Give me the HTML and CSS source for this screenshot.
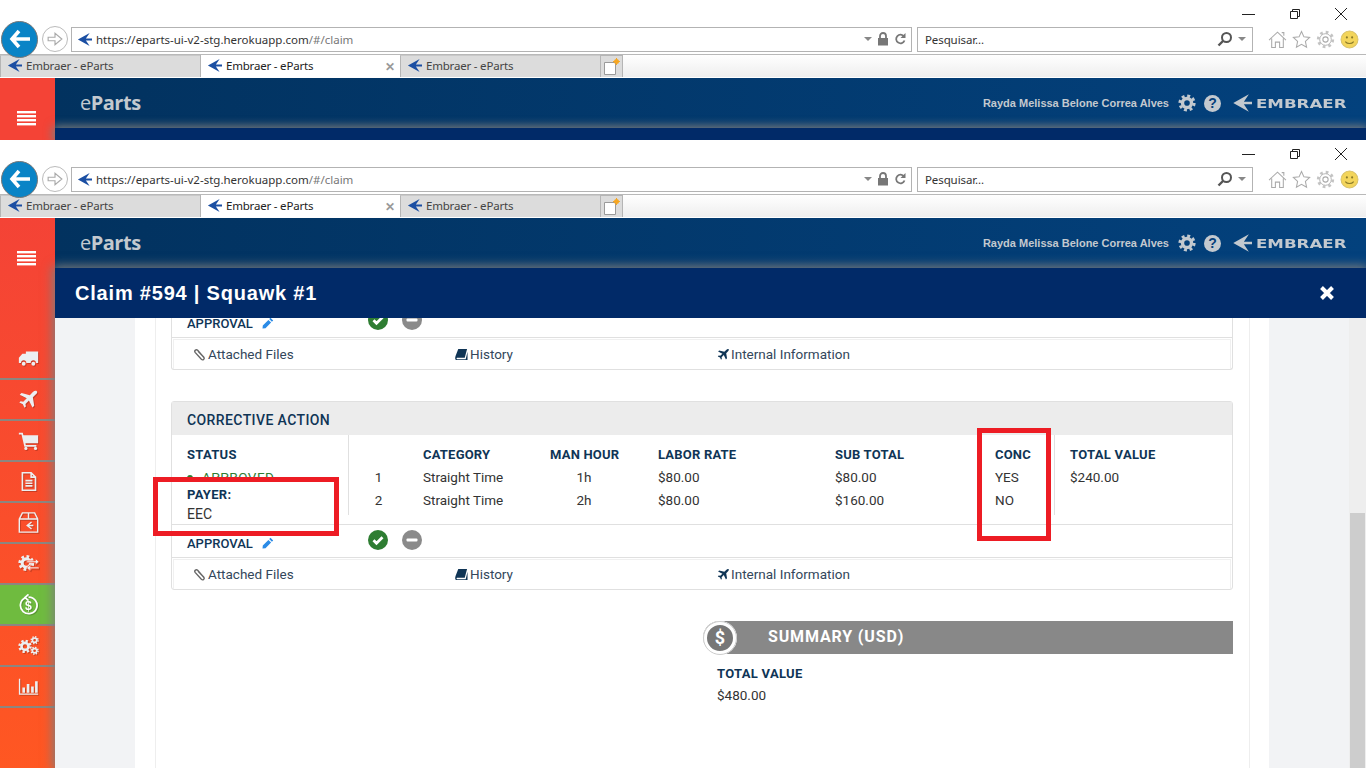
FILE: index.html
```html
<!DOCTYPE html>
<html lang="en">
<head>
    <meta charset="UTF-8">
    <title>Embraer - eParts</title>
    <link rel="stylesheet" href="styles.css">
</head>
<body>
    <svg class="sprite" xmlns="http://www.w3.org/2000/svg">
        <symbol id="i-logo" viewBox="0 0 16 16"><path d="M13.500 1L1 8l12.500 7-4-6H16V7H9.500z"/></symbol>
        <symbol id="i-gear" viewBox="0 0 24 24"><circle cx="12" cy="12" r="9.500" fill="none" stroke="currentColor" stroke-width="4" stroke-dasharray="3.900 3.560"/><circle cx="12" cy="12" r="6" fill="none" stroke="currentColor" stroke-width="4.500"/></symbol>
        <symbol id="i-truck" viewBox="0 0 24 24"><path d="M9 4h14v13h-2.500a3 3 0 0 0-6 0H9.500a3 3 0 0 0-6 0H1v-6l4-4.500h4z"/><circle cx="6.500" cy="18" r="2.200"/><circle cx="17.500" cy="18" r="2.200"/></symbol>
        <symbol id="i-plane" viewBox="0 0 24 24"><path d="M21.500 2.500c-1-1-3-.5-4.500 1L13.500 7 4 4.500 2 6.500l8 4-4 4-3-.5-1.500 1.500 4 2 2 4 1.500-1.500-.5-3 4-4 4 8 2-2L17 9.500 20.500 6c1.500-1.500 2-2.500 1-3.500z"/></symbol>
        <symbol id="i-cart" viewBox="0 0 24 24"><path d="M1 3h4.500l.8 3H23v9H8.500l.4 2H21v2H7.300L4 5H1z"/><circle cx="9" cy="21" r="1.800"/><circle cx="20" cy="21" r="1.800"/></symbol>
        <symbol id="i-file" viewBox="0 0 24 24"><path d="M5 2h10l5 5v15H5zM15 2v5h5M8.500 11h8M8.500 14h8M8.500 17h8" fill="none" stroke="currentColor" stroke-width="1.800"/></symbol>
        <symbol id="i-return" viewBox="0 0 24 24"><path d="M1.500 8L5 1h14l3.500 7v15h-21zM1.500 8h21M12 1v7M15.500 11.500l-5 4 5 4M10.500 15.500h7" fill="none" stroke="currentColor" stroke-width="1.600"/></symbol>
        <symbol id="i-swap" viewBox="0 0 24 24"><use href="#i-gear" x="0" y="2" width="19" height="19"/><path d="M10 9h10V6.500l4 3.500-4 3.500V11H10zM24 16H14v-2.500L10 17l4 3.500V18h10z" stroke="#ff5030" stroke-width=".8"/></symbol>
        <symbol id="i-money" viewBox="0 0 24 24"><path d="M8 4.500a9.500 9.500 0 1 0 4-1M12 .5L8 4l4 3.500" fill="none" stroke="currentColor" stroke-width="2"/><text x="12" y="18" text-anchor="middle" class="svg-dollar">$</text></symbol>
        <symbol id="i-gears" viewBox="0 0 24 24"><use href="#i-gear" x="0" y="5" width="16" height="16"/><use href="#i-gear" x="14" y="1" width="10" height="10"/><use href="#i-gear" x="14" y="13" width="10" height="10"/></symbol>
        <symbol id="i-chart" viewBox="0 0 24 24"><path d="M1 3h1.500v17H23v1.500H1zM5 13h3v6H5zM10 9h3v10h-3zM15 12h3v7h-3zM19.500 6h3v13h-3z"/></symbol>
        <symbol id="i-clip" viewBox="0 0 14 14"><path d="M12 10.500L5 2.500C3.500 1 1 2.800 2.300 4.700l6.700 7.500c1.700 1.500 3.800-.5 2.700-2.200L5.500 3.500" fill="none" stroke="currentColor" stroke-width="1.500"/></symbol>
        <symbol id="i-book" viewBox="0 0 14 14"><path d="M3.500 1H13l-2.500 9.500H2.300c-.8 0-.8 1.500 0 1.500h9.200l2-8v9H1.500C0 13 0 11 .5 9z"/></symbol>
        <symbol id="i-pencil" viewBox="0 0 12 12"><path d="M8.500.8l2.700 2.700-1.300 1.300-2.700-2.700zM6.400 2.900l2.700 2.700L3.500 11.200.5 11.500l.3-3z"/></symbol>
        <symbol id="i-check" viewBox="0 0 20 20"><circle cx="10" cy="10" r="10"/><path d="M5.500 10.300l3 3 6-6" fill="none" stroke="#fff" stroke-width="2.800"/></symbol>
        <symbol id="i-minus" viewBox="0 0 20 20"><circle cx="10" cy="10" r="10"/><rect x="4.500" y="8.500" width="11" height="3" rx="1" fill="#fff"/></symbol>
        <symbol id="i-search" viewBox="0 0 16 16"><circle cx="9.500" cy="6.500" r="4.500" fill="none" stroke="currentColor" stroke-width="2"/><path d="M6 10l-4.500 4.500" stroke="currentColor" stroke-width="2.400"/></symbol>
        <symbol id="i-lock" viewBox="0 0 12 14"><path d="M3 6V4a3 3 0 0 1 6 0v2" fill="none" stroke="currentColor" stroke-width="1.800"/><rect x="1" y="6" width="10" height="7.500"/></symbol>
        <symbol id="i-refresh" viewBox="0 0 12 14"><path d="M10 4.500a4.300 4.300 0 1 0 .5 4" fill="none" stroke="currentColor" stroke-width="1.800"/><path d="M11.500 1v5h-5z"/></symbol>
        <symbol id="i-home" viewBox="0 0 18 18"><path d="M1 9.500L9 2l8 7.500M3.500 8v8.500H7v-5h4v5h3.500V8M13 2.500h2v3" fill="none" stroke="currentColor"/></symbol>
        <symbol id="i-star" viewBox="0 0 18 18"><path d="M9 1.500l2.300 5 5.400.6-4 3.700 1.100 5.400L9 13.500l-4.800 2.700 1.100-5.400-4-3.700 5.400-.6z" fill="none" stroke="currentColor"/></symbol>
        <symbol id="i-gear-thin" viewBox="0 0 18 18"><circle cx="9" cy="9" r="2.500" fill="none" stroke="currentColor"/><circle cx="9" cy="9" r="5.500" fill="none" stroke="currentColor" stroke-width=".8"/><circle cx="9" cy="9" r="7" fill="none" stroke="currentColor" stroke-width="2.400" stroke-dasharray="2.600 2.900" opacity=".7"/></symbol>
        <symbol id="i-smile" viewBox="0 0 18 18"><circle cx="9" cy="9" r="8" fill="#f3d55b" stroke="#d9c26a"/><circle cx="6.500" cy="7" r="1" fill="#8a7a2a"/><circle cx="11.500" cy="7" r="1" fill="#8a7a2a"/><path d="M5 11c2 2.500 6 2.500 8 0" fill="none" stroke="#8a7a2a"/></symbol>
        <symbol id="i-newtab" viewBox="0 0 18 18"><path d="M1.500 4.500h11v12h-11z" fill="#fff" stroke="#9a9a9a"/><circle cx="13.500" cy="3.500" r="2.500" fill="#f5a623"/><path d="M13.500 0v7M10 3.500h7" stroke="#f5a623"/></symbol>
        <symbol id="i-forward" viewBox="0 0 14 14"><path d="M1 5.500h6V2l6 5-6 5V8.500H1z" fill="none" stroke="currentColor"/></symbol>
    </svg>

    <!-- primeira captura, cortada -->
    <section class="shot shot-top">
        <div class="browser">
            <div class="win-buttons">
                <span class="win-btn"><svg width="14" height="14" viewBox="0 0 14 14"><path d="M0 7.500h13" stroke="#222"/></svg></span>
                <span class="win-btn"><svg width="14" height="14" viewBox="0 0 14 14"><path d="M2.500 4.500h7v7h-7zM4.500 4V2.500h7v7H10" fill="none" stroke="#222"/></svg></span>
                <span class="win-btn"><svg width="14" height="14" viewBox="0 0 14 14"><path d="M1 1l12 12M13 1L1 13" stroke="#222"/></svg></span>
            </div>
            <div class="nav-row">
                <span class="btn-back"><svg width="24" height="24" viewBox="0 0 24 24"><path d="M11 4l-7 8 7 8M4 12h18" fill="none" stroke="#fff" stroke-width="3.600"/></svg></span>
                <span class="btn-forward"><svg class="ico-14"><use href="#i-forward"/></svg></span>
                <div class="url-box">
                    <svg class="ico-logo"><use href="#i-logo"/></svg>
                    <span class="url-text">https://eparts-ui-v2-stg.herokuapp.com<span class="url-path">/#/claim</span></span>
                    <span class="caret"></span>
                    <svg class="ico-lock"><use href="#i-lock"/></svg>
                    <svg class="ico-lock"><use href="#i-refresh"/></svg>
                </div>
                <div class="search-box">
                    <span class="search-text">Pesquisar...</span>
                    <svg class="ico-search"><use href="#i-search"/></svg>
                    <span class="caret"></span>
                </div>
                <div class="tools">
                    <svg><use href="#i-home"/></svg>
                    <svg><use href="#i-star"/></svg>
                    <svg><use href="#i-gear-thin"/></svg>
                    <svg><use href="#i-smile"/></svg>
                </div>
            </div>
            <div class="tab-row">
                <div class="tab"><svg class="ico-logo"><use href="#i-logo"/></svg>Embraer - eParts</div>
                <div class="tab active"><svg class="ico-logo"><use href="#i-logo"/></svg>Embraer - eParts<span class="tab-close">✕</span></div>
                <div class="tab"><svg class="ico-logo"><use href="#i-logo"/></svg>Embraer - eParts</div>
                <div class="tab-new"><svg width="18" height="18"><use href="#i-newtab"/></svg></div>
            </div>
        </div>
        <div class="app">
            <aside class="sidebar">
                <div class="hamburger"><span></span><span></span><span></span><span></span></div>
            </aside>
            <header class="app-header">
                <div class="brand"><span class="brand-e">e</span>Parts</div>
                <div class="user-area">
                    <span class="user-name">Rayda Melissa Belone Correa Alves</span>
                    <svg class="hdr-icon"><use href="#i-gear"/></svg>
                    <span class="hdr-help">?</span>
                    <svg class="hdr-logo"><use href="#i-logo"/></svg>
                    <span class="hdr-word"><span>EMBRAER</span></span>
                </div>
            </header>
            <div class="modal"><div class="modal-title"></div></div>
        </div>
    </section>

    <!-- segunda captura -->
    <section class="shot shot-main">
        <div class="browser">
            <div class="win-buttons">
                <span class="win-btn"><svg width="14" height="14" viewBox="0 0 14 14"><path d="M0 7.500h13" stroke="#222"/></svg></span>
                <span class="win-btn"><svg width="14" height="14" viewBox="0 0 14 14"><path d="M2.500 4.500h7v7h-7zM4.500 4V2.500h7v7H10" fill="none" stroke="#222"/></svg></span>
                <span class="win-btn"><svg width="14" height="14" viewBox="0 0 14 14"><path d="M1 1l12 12M13 1L1 13" stroke="#222"/></svg></span>
            </div>
            <div class="nav-row">
                <span class="btn-back"><svg width="24" height="24" viewBox="0 0 24 24"><path d="M11 4l-7 8 7 8M4 12h18" fill="none" stroke="#fff" stroke-width="3.600"/></svg></span>
                <span class="btn-forward"><svg class="ico-14"><use href="#i-forward"/></svg></span>
                <div class="url-box">
                    <svg class="ico-logo"><use href="#i-logo"/></svg>
                    <span class="url-text">https://eparts-ui-v2-stg.herokuapp.com<span class="url-path">/#/claim</span></span>
                    <span class="caret"></span>
                    <svg class="ico-lock"><use href="#i-lock"/></svg>
                    <svg class="ico-lock"><use href="#i-refresh"/></svg>
                </div>
                <div class="search-box">
                    <span class="search-text">Pesquisar...</span>
                    <svg class="ico-search"><use href="#i-search"/></svg>
                    <span class="caret"></span>
                </div>
                <div class="tools">
                    <svg><use href="#i-home"/></svg>
                    <svg><use href="#i-star"/></svg>
                    <svg><use href="#i-gear-thin"/></svg>
                    <svg><use href="#i-smile"/></svg>
                </div>
            </div>
            <div class="tab-row">
                <div class="tab"><svg class="ico-logo"><use href="#i-logo"/></svg>Embraer - eParts</div>
                <div class="tab active"><svg class="ico-logo"><use href="#i-logo"/></svg>Embraer - eParts<span class="tab-close">✕</span></div>
                <div class="tab"><svg class="ico-logo"><use href="#i-logo"/></svg>Embraer - eParts</div>
                <div class="tab-new"><svg width="18" height="18"><use href="#i-newtab"/></svg></div>
            </div>
        </div>
        <div class="app">
            <aside class="sidebar">
                <div class="hamburger"><span></span><span></span><span></span><span></span></div>
                <nav class="side-menu">
                    <a class="side-item"><svg><use href="#i-truck"/></svg></a>
                    <a class="side-item"><svg><use href="#i-plane"/></svg></a>
                    <a class="side-item"><svg><use href="#i-cart"/></svg></a>
                    <a class="side-item"><svg><use href="#i-file"/></svg></a>
                    <a class="side-item"><svg><use href="#i-return"/></svg></a>
                    <a class="side-item"><svg><use href="#i-swap"/></svg></a>
                    <a class="side-item current"><svg><use href="#i-money"/></svg></a>
                    <a class="side-item"><svg><use href="#i-gears"/></svg></a>
                    <a class="side-item"><svg><use href="#i-chart"/></svg></a>
                </nav>
            </aside>
            <header class="app-header">
                <div class="brand"><span class="brand-e">e</span>Parts</div>
                <div class="user-area">
                    <span class="user-name">Rayda Melissa Belone Correa Alves</span>
                    <svg class="hdr-icon"><use href="#i-gear"/></svg>
                    <span class="hdr-help">?</span>
                    <svg class="hdr-logo"><use href="#i-logo"/></svg>
                    <span class="hdr-word"><span>EMBRAER</span></span>
                </div>
            </header>
            <div class="modal">
                <div class="modal-title">
                    <h1>Claim #594 | Squawk #1</h1>
                    <svg class="modal-close" width="16" height="16" viewBox="0 0 16 16"><path d="M2.500 2.500l11 11M13.500 2.500l-11 11" stroke="#fff" stroke-width="4"/></svg>
                </div>
                <div class="modal-body">
                    <div class="scroll-area">
                        <div class="panel">
                            <div class="panel-inner">
                                <div class="card card-cut">
                                    <div class="approval">
                                        <span class="approval-label">APPROVAL</span>
                                        <svg class="ico-pencil"><use href="#i-pencil"/></svg>
                                        <svg class="ico-check"><use href="#i-check"/></svg>
                                        <svg class="ico-minus"><use href="#i-minus"/></svg>
                                    </div>
                                    <div class="card-links">
                                        <span class="link link-files"><svg><use href="#i-clip"/></svg>Attached Files</span>
                                        <span class="link link-history"><svg><use href="#i-book"/></svg>History</span>
                                        <span class="link link-info"><svg><use href="#i-plane"/></svg>Internal Information</span>
                                    </div>
                                </div>

                                <div class="card">
                                    <div class="card-head">CORRECTIVE ACTION</div>
                                    <div class="card-body">
                                        <div class="status-col">
                                            <div class="col-label">STATUS</div>
                                            <div class="status-value"><span class="dot"></span>APPROVED</div>
                                            <div class="col-label payer-label">PAYER:</div>
                                            <div class="payer-value">EEC</div>
                                        </div>
                                        <table class="lines">
                                            <tr>
                                                <th class="c-num"></th>
                                                <th class="c-cat">CATEGORY</th>
                                                <th class="c-hour">MAN HOUR</th>
                                                <th class="c-rate">LABOR RATE</th>
                                                <th class="c-sub">SUB TOTAL</th>
                                                <th class="c-conc">CONC</th>
                                            </tr>
                                            <tr>
                                                <td class="c-num">1</td>
                                                <td>Straight Time</td>
                                                <td class="c-hour">1h</td>
                                                <td class="c-rate">$80.00</td>
                                                <td>$80.00</td>
                                                <td>YES</td>
                                            </tr>
                                            <tr>
                                                <td class="c-num">2</td>
                                                <td>Straight Time</td>
                                                <td class="c-hour">2h</td>
                                                <td class="c-rate">$80.00</td>
                                                <td>$160.00</td>
                                                <td>NO</td>
                                            </tr>
                                        </table>
                                        <div class="total-col">
                                            <div class="col-label">TOTAL VALUE</div>
                                            <div class="total-value">$240.00</div>
                                        </div>
                                        <div class="mark mark-payer"></div>
                                        <div class="mark mark-conc"></div>
                                    </div>
                                    <div class="approval">
                                        <span class="approval-label">APPROVAL</span>
                                        <svg class="ico-pencil"><use href="#i-pencil"/></svg>
                                        <svg class="ico-check"><use href="#i-check"/></svg>
                                        <svg class="ico-minus"><use href="#i-minus"/></svg>
                                    </div>
                                    <div class="card-links">
                                        <span class="link link-files"><svg><use href="#i-clip"/></svg>Attached Files</span>
                                        <span class="link link-history"><svg><use href="#i-book"/></svg>History</span>
                                        <span class="link link-info"><svg><use href="#i-plane"/></svg>Internal Information</span>
                                    </div>
                                </div>

                                <div class="summary">
                                    <div class="summary-bar">
                                        <span class="summary-coin">$</span>
                                        <span class="summary-title">SUMMARY (USD)</span>
                                    </div>
                                    <div class="col-label summary-label">TOTAL VALUE</div>
                                    <div class="summary-value">$480.00</div>
                                </div>
                            </div>
                        </div>
                    </div>
                    <div class="scroll-track"><div class="scroll-thumb"></div></div>
                </div>
            </div>
        </div>
    </section>
</body>
</html>
```

FILE: styles.css
```css
* {
    box-sizing: border-box;
}

html, body {
    margin: 0;
    padding: 0;
}

body {
    width: 1366px;
    height: 768px;
    overflow: hidden;
    background-color: #fff;
    font-family: Roboto, "Liberation Sans", sans-serif;
}

.sprite {
    display: none;
}

.svg-dollar {
    font-family: "Liberation Sans", sans-serif;
    font-weight: bold;
    font-size: 14px;
    fill: currentColor;
}

.shot {
    display: flex;
    flex-direction: column;
    overflow: hidden;
}

.shot-top {
    height: 140px;
}

.shot-main {
    height: 628px;
}

/* browser */
.browser {
    height: 78px;
    flex: none;
    background-color: #fff;
    font-family: "Noto Sans", sans-serif;
    font-size: 11.5px;
    color: #333;
}

.win-buttons {
    display: flex;
    justify-content: flex-end;
    height: 22px;
    padding-right: 2px;
}

.win-btn {
    display: flex;
    justify-content: center;
    align-items: center;
    width: 46px;
    padding-top: 6px;
}

.nav-row {
    display: flex;
    align-items: center;
    height: 32px;
    padding-left: 1px;
}

.btn-back {
    display: flex;
    justify-content: center;
    align-items: center;
    flex: none;
    width: 37px;
    height: 37px;
    margin-top: 2px;
    border: 1px solid #777;
    border-radius: 50%;
    background-color: #0a84c6;
    position: relative;
    z-index: 1;
}

.btn-forward {
    display: flex;
    justify-content: center;
    align-items: center;
    flex: none;
    width: 26px;
    height: 26px;
    margin-left: 4px;
    margin-top: 2px;
    border: 1px solid #bbb;
    border-radius: 50%;
    color: #aaa;
}

.ico-14 {
    width: 16px;
    height: 16px;
}

.url-box, .search-box {
    display: flex;
    align-items: center;
    height: 25px;
    margin-top: 2px;
    border: 1px solid #b3b3b3;
}

.url-box {
    width: 841px;
    margin-left: 3px;
    padding: 0 5px;
}

.search-box {
    width: 336px;
    margin-left: 5px;
    padding: 0 6px 0 7px;
}

.ico-logo {
    width: 15px;
    height: 15px;
    flex: none;
    fill: #1b4fa3;
}

.url-text {
    flex: 1;
    margin-left: 4px;
    white-space: nowrap;
}

.url-path {
    color: #777;
}

.search-text {
    flex: 1;
    letter-spacing: -0.1px;
}

.caret {
    width: 0;
    height: 0;
    flex: none;
    border-left: 4px solid transparent;
    border-right: 4px solid transparent;
    border-top: 4px solid #888;
}

.ico-lock {
    width: 12px;
    height: 14px;
    margin-left: 5px;
    fill: #777;
    color: #777;
}

.ico-search {
    width: 16px;
    height: 16px;
    margin-right: 5px;
    color: #555;
}

.tools {
    display: flex;
    gap: 5px;
    margin-left: 15px;
    margin-top: 2px;
    color: #aaa;
}

.tools svg {
    width: 19px;
    height: 19px;
}

.tab-row {
    display: flex;
    height: 24px;
    border-top: 1px solid #b9b9b9;
    background: linear-gradient(#fff, #eee);
    border-bottom: 1px solid #fff;
}

.tab {
    display: flex;
    align-items: center;
    width: 200px;
    padding: 0 0 2px 6px;
    background-color: #dcdcdc;
    border-left: 1px solid #b5b5b5;
    border-top: 1px solid #c9c9c9;
    color: #444;
    letter-spacing: -0.2px;
    white-space: nowrap;
}

.tab .ico-logo {
    margin-right: 4px;
}

.tab.active {
    position: relative;
    background-color: #fff;
    border-top: 0;
    color: #222;
}

.tab-close {
    position: absolute;
    right: 5px;
    top: 3px;
    color: #999;
    font-weight: bold;
    font-size: 12px;
}

.tab-new {
    display: flex;
    justify-content: center;
    align-items: center;
    width: 23px;
    background-color: #dcdcdc;
    border: 1px solid #b5b5b5;
    border-bottom: 0;
}

/* app */
.app {
    flex: 1;
    display: flex;
    position: relative;
    overflow: hidden;
    background-color: #f2f3f5;
}

.sidebar {
    width: 55px;
    flex: none;
    padding-top: 33px;
    background: linear-gradient(#f44336, #ff5722);
}

.shot-top .sidebar {
    background: #f44336;
}

.hamburger {
    display: flex;
    flex-direction: column;
    gap: 2px;
    width: 19px;
    height: 15px;
    margin-left: 17px;
}

.hamburger span {
    display: block;
    height: 2px;
    background-color: #fff;
    box-shadow: 0 1px 0 rgba(255, 255, 255, 0.4);
}

.side-menu {
    margin-top: 73px;
}

.side-item {
    display: flex;
    justify-content: center;
    align-items: center;
    height: 41px;
    padding-left: 2px;
    border-bottom: 2px solid #8c8680;
    color: #eceff1;
}

.side-item svg {
    width: 21px;
    height: 21px;
    fill: currentColor;
    filter: drop-shadow(1px 1px 0 rgba(0, 0, 0, 0.2));
}

.side-item.current {
    background-color: #6fbb3f;
    color: #fff;
}

.app-header {
    flex: 1;
    display: flex;
    justify-content: space-between;
    align-items: center;
    height: 50px;
    padding: 0 21px 0 25px;
    background: linear-gradient(90deg, #02325f, #03417d);
}

.brand {
    margin-bottom: 2px;
    font-family: "Open Sans", sans-serif;
    font-size: 20px;
    font-weight: 700;
    color: #c3c9cf;
    letter-spacing: -0.5px;
}

.brand-e {
    font-weight: 400;
}

.user-area {
    display: flex;
    align-items: center;
    color: #c3c9cf;
}

.user-name {
    font-family: "Liberation Sans", sans-serif;
    font-size: 11px;
    font-weight: bold;
}

.hdr-icon {
    width: 18px;
    height: 18px;
    margin-left: 9px;
}

.hdr-help {
    display: flex;
    justify-content: center;
    align-items: center;
    width: 17px;
    height: 17px;
    margin-left: 8px;
    border-radius: 50%;
    background-color: #c3c9cf;
    color: #03407a;
    font-family: "Liberation Sans", sans-serif;
    font-size: 14px;
    font-weight: bold;
}

.hdr-logo {
    width: 20px;
    height: 20px;
    margin-left: 11px;
    fill: #c3c9cf;
}

.hdr-word {
    width: 89px;
    margin-left: 4px;
    font-family: "DejaVu Sans", sans-serif;
    font-size: 13px;
    font-weight: bold;
    white-space: nowrap;
}

.hdr-word span {
    display: inline-block;
    transform: scaleX(1.28);
    transform-origin: left;
}

/* modal */
.modal {
    position: absolute;
    left: 55px;
    top: 50px;
    right: 0;
    bottom: 0;
    display: flex;
    flex-direction: column;
    box-shadow: 0 0 10px 2px rgba(125, 125, 125, 1);
}

.modal-title {
    display: flex;
    justify-content: space-between;
    align-items: center;
    flex: none;
    height: 50px;
    padding: 0 31px 0 20px;
    background-color: #012a68;
}

.modal-title h1 {
    margin: 0;
    font-family: "Liberation Sans", sans-serif;
    font-size: 20px;
    font-weight: bold;
    letter-spacing: 0.8px;
    color: #fff;
}

.modal-body {
    flex: 1;
    display: flex;
    min-height: 0;
    background-color: #f2f3f5;
}

.scroll-area {
    flex: 1;
    overflow: hidden;
    padding: 0 80px;
}

.scroll-track {
    width: 17px;
    flex: none;
    padding: 195px 1px 0;
    background-color: #eee;
}

.scroll-thumb {
    height: 100%;
    background-color: #cdcdcd;
}

.panel {
    height: 100%;
    padding: 0 19px 0 20px;
    background-color: #fff;
}

.panel-inner {
    display: flow-root;
    height: 100%;
    padding: 0 16px 0 15px;
    border-left: 1px solid #eee;
    border-right: 1px solid #eee;
}

/* cards */
.card {
    border: 1px solid #e0e0e0;
    border-radius: 3px;
    color: #333;
    font-size: 13.5px;
}

.card + .card {
    margin-top: 31px;
}

.card-cut {
    margin-top: -13px;
    border-top: 0;
}

.card-head {
    height: 33px;
    padding: 8px 0 0 15px;
    background-color: #ececec;
    color: #0f3556;
    font-size: 14px;
    font-weight: 500;
    line-height: 20px;
    letter-spacing: 0.4px;
}

.card-body {
    position: relative;
    display: flex;
    height: 90px;
    border-bottom: 1px solid #e0e0e0;
}

.status-col {
    width: 177px;
    height: 80px;
    flex: none;
    padding: 8px 0 0 15px;
    border-right: 1px solid #e0e0e0;
}

.col-label {
    height: 23px;
    line-height: 23px;
    color: #0f3556;
    font-size: 13px;
    font-weight: 700;
    letter-spacing: 0.3px;
}

.status-value {
    height: 11px;
    overflow: hidden;
    color: #2e7d32;
    line-height: 23px;
    letter-spacing: 0.5px;
}

.dot {
    display: inline-block;
    width: 6px;
    height: 6px;
    margin-right: 9px;
    border-radius: 50%;
    background-color: #2e7d32;
    vertical-align: 1px;
}

.payer-label {
    height: 19px;
    margin-top: 8px;
    line-height: 19px;
}

.payer-value {
    margin-top: 1px;
    font-size: 14px;
    line-height: 19px;
}

.lines {
    width: 705px;
    flex: none;
    border-collapse: collapse;
    table-layout: fixed;
    align-self: flex-start;
}

.lines th, .lines td {
    height: 23px;
    padding: 0;
    text-align: left;
    white-space: nowrap;
}

.lines tr:first-child th {
    height: 30px;
    padding-top: 8px;
    color: #0f3556;
    font-size: 13px;
    font-weight: 700;
    letter-spacing: 0.2px;
}

.lines .c-num {
    width: 74px;
    padding-right: 15px;
    text-align: center;
}

.lines .c-cat {
    width: 127px;
}

.lines .c-hour {
    width: 68px;
    text-align: center;
}

.lines .c-rate {
    width: 217px;
    padding-left: 40px;
}

.lines .c-sub {
    width: 160px;
}

.lines .c-conc {
    width: 59px;
}

.total-col {
    flex: 1;
    height: 80px;
    padding: 8px 0 0 15px;
    border-left: 1px solid #e0e0e0;
}

.total-value {
    line-height: 23px;
}

.mark {
    position: absolute;
    border: 5px solid #ed1c24;
}

.mark-payer {
    left: -19px;
    top: 42px;
    width: 186px;
    height: 59px;
}

.mark-conc {
    left: 805px;
    top: -7px;
    width: 74px;
    height: 113px;
}

.approval {
    display: flex;
    align-items: center;
    height: 33px;
    padding-left: 15px;
    border-bottom: 1px solid #e0e0e0;
}

.approval-label {
    width: 75px;
    margin-top: 4px;
    color: #0f3556;
    font-size: 13px;
    font-weight: 500;
}

.ico-pencil {
    width: 12px;
    height: 12px;
    margin-top: 4px;
    fill: #2b8be6;
}

.ico-check, .ico-minus {
    width: 20px;
    height: 20px;
    margin-top: -2px;
}

.ico-check {
    margin-left: 94px;
    fill: #2e7d32;
}

.ico-minus {
    margin-left: 14px;
    fill: #8a8a8a;
}

.card-links {
    display: flex;
    align-items: center;
    height: 30px;
    margin: 1px 1px 0 1px;
    padding: 0 0 1px 19px;
    border: 1px solid #f0f0f0;
    border-bottom: 0;
}

.link {
    display: flex;
    align-items: center;
    color: #33475b;
}

.link svg {
    width: 13px;
    height: 13px;
    margin-right: 2px;
    fill: #0f3556;
    color: #666;
}

.link-files {
    width: 262px;
}

.link-history {
    width: 262px;
}

.link-info svg {
    margin-right: 1px;
}

/* summary */
.summary {
    margin: 31px 0 0 532px;
}

.summary-bar {
    display: flex;
    align-items: center;
    height: 33px;
    background-color: #888;
    border-radius: 17px 0 0 17px;
}

.summary-coin {
    display: flex;
    justify-content: center;
    align-items: center;
    width: 34px;
    height: 34px;
    flex: none;
    border: 4px solid #fff;
    border-radius: 50%;
    outline: 1px solid #ccc;
    outline-offset: -1px;
    background-color: #777;
    color: #fff;
    font-size: 18px;
    font-weight: 700;
}

.summary-title {
    margin-left: 31px;
    padding-bottom: 2px;
    color: #fff;
    font-size: 16px;
    font-weight: 700;
    letter-spacing: 0.85px;
}

.summary-label {
    margin: 8px 0 0 14px;
}

.summary-value {
    margin-left: 14px;
    color: #333;
    font-size: 13.5px;
    line-height: 21px;
}
```
